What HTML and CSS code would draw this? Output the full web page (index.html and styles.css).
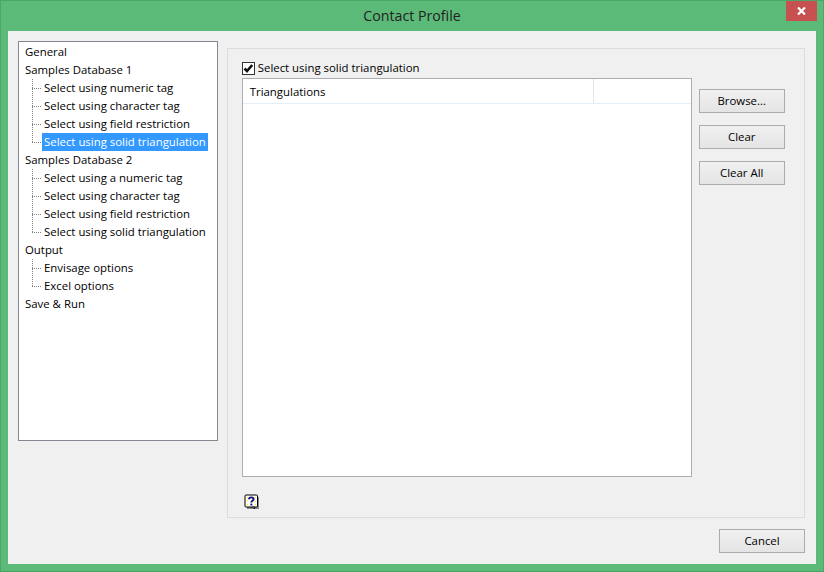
FILE: index.html
```html
<!DOCTYPE html>
<html lang="en">
<head>
<meta charset="utf-8">
<title>Contact Profile</title>
<link rel="stylesheet" href="styles.css">
</head>
<body>
<div class="window">
  <header class="titlebar">
    <span class="title">Contact Profile</span>
    <button class="close" aria-label="Close">
      <svg width="9" height="8" viewBox="0 0 9 8"><path d="M1 0.5 L8 7.5 M8 0.5 L1 7.5" stroke="#fff" stroke-width="2.2" fill="none"/></svg>
    </button>
  </header>
  <div class="client">
    <div class="main">
      <ul class="tree">
        <li class="node">General</li>
        <li class="node">Samples Database 1</li>
        <li class="leaf"><span>Select using numeric tag</span></li>
        <li class="leaf"><span>Select using character tag</span></li>
        <li class="leaf"><span>Select using field restriction</span></li>
        <li class="leaf last"><span class="selected">Select using solid triangulation</span></li>
        <li class="node">Samples Database 2</li>
        <li class="leaf"><span>Select using a numeric tag</span></li>
        <li class="leaf"><span>Select using character tag</span></li>
        <li class="leaf"><span>Select using field restriction</span></li>
        <li class="leaf last"><span>Select using solid triangulation</span></li>
        <li class="node">Output</li>
        <li class="leaf"><span>Envisage options</span></li>
        <li class="leaf last"><span>Excel options</span></li>
        <li class="node">Save &amp; Run</li>
      </ul>
      <section class="panel">
        <label class="check">
          <span class="box">
            <svg width="11" height="11" viewBox="0 0 11 11"><path d="M1.5 5.5 L4 8 L9.2 2" stroke="#111" stroke-width="2.6" fill="none"/></svg>
          </span>
          Select using solid triangulation
        </label>
        <div class="content">
          <div class="list">
            <div class="list-head">
              <div class="col-main">Triangulations</div>
              <div class="col-rest"></div>
            </div>
          </div>
          <div class="actions">
            <button class="btn">Browse...</button>
            <button class="btn">Clear</button>
            <button class="btn">Clear All</button>
          </div>
        </div>
        <div class="help">
          <svg width="16" height="16" viewBox="0 0 16 16">
            <path d="M3 3 H15 V15 H3 Z" fill="#8a8a8a"/>
            <rect x="1" y="1" width="12.5" height="12" rx="1" fill="#fffff4" stroke="#000"/>
            <path d="M8.5 13 L10.5 15 L10.5 13 Z" fill="#fff" stroke="#000" stroke-width="0.8"/>
            <path d="M3 3h1v1H3zM11 3h1v1h-1zM3 6h1v1H3zM11 7h1v1h-1zM3 10h1v1H3zM11 10h1v1h-1z" fill="#f0e800"/>
            <path d="M5 5.2 C5 2.8 9.6 2.8 9.6 5.2 C9.6 6.8 7.3 6.8 7.3 8.5" stroke="#10108a" stroke-width="1.9" fill="none"/>
            <rect x="6.4" y="9.6" width="1.9" height="1.9" fill="#10108a"/>
          </svg>
        </div>
      </section>
    </div>
    <footer class="footer">
      <button class="btn">Cancel</button>
    </footer>
  </div>
</div>
</body>
</html>
```
FILE: styles.css
```css
* { box-sizing: border-box; }
html, body { margin: 0; padding: 0; }
body {
  width: 824px;
  height: 572px;
  overflow: hidden;
  font-family: "Open Sans", "Noto Sans", sans-serif;
  font-size: 11.4px;
  color: #000;
}
.window {
  width: 824px;
  height: 572px;
  display: flex;
  flex-direction: column;
  background: #5cba78;
  border: 1px solid #4ea56a;
  padding: 0 7px 7px;
}
.titlebar {
  height: 30px;
  flex: none;
  display: flex;
  justify-content: center;
  position: relative;
}
.title {
  font-size: 14.2px;
  line-height: 30px;
  color: #222;
}
.close {
  position: absolute;
  top: 0;
  right: -1px;
  width: 31px;
  height: 20px;
  padding: 0;
  border: 0;
  background: #c75050;
  display: flex;
  align-items: center;
  justify-content: center;
}
.client {
  flex: 1;
  display: flex;
  flex-direction: column;
  background: #f0f0f0;
  padding: 10px 11px 11px 10px;
}
.main {
  display: flex;
  align-items: flex-start;
  gap: 9px;
}
.tree {
  list-style: none;
  margin: 0;
  width: 200px;
  height: 400px;
  padding: 1px 0 0 6px;
  background: #fff;
  border: 1px solid #828790;
  line-height: 18px;
}
.node, .leaf { height: 18px; white-space: nowrap; }
.leaf {
  padding-left: 17px;
  background-image:
    repeating-linear-gradient(to bottom, #808080 0 1px, transparent 1px 2px),
    repeating-linear-gradient(to right, #808080 0 1px, transparent 1px 2px);
  background-repeat: no-repeat;
  background-size: 1px 100%, 10px 1px;
  background-position: 7px 0, 7px 9px;
}
.leaf.last {
  background-size: 1px 10px, 10px 1px;
}
.leaf span { display: inline-block; padding: 0 2px; height: 18px; }
.leaf .selected { background: #3399ff; color: #fff; }
.panel {
  width: 579px;
  height: 470px;
  margin-top: 7px;
  border: 1px solid #dcdcdc;
  padding: 12px 14px 0;
  display: flex;
  flex-direction: column;
}
.check {
  display: flex;
  align-items: center;
  gap: 3px;
  height: 14px;
  line-height: 14px;
}
.box {
  width: 13px;
  height: 13px;
  border: 1px solid #333;
  background: #fff;
  display: flex;
  align-items: center;
  justify-content: center;
}
.content {
  margin-top: 3px;
  display: flex;
  gap: 7px;
}
.list {
  width: 450px;
  height: 399px;
  background: #fff;
  border: 1px solid #abadb3;
}
.list-head {
  display: flex;
  height: 25px;
  border-bottom: 1px solid #e5eef7;
}
.col-main {
  width: 351px;
  padding-left: 7px;
  line-height: 25px;
  border-right: 1px solid #e5e5e5;
}
.col-rest { flex: 1; }
.actions {
  display: flex;
  flex-direction: column;
  gap: 12px;
  padding-top: 11px;
}
.btn {
  width: 86px;
  height: 24px;
  padding: 0 0 1px;
  font: inherit;
  color: #000;
  border: 1px solid #acacac;
  background: linear-gradient(to bottom, #f0f0f0, #e5e5e5);
}
.help {
  margin-top: 17px;
  margin-left: 2px;
  height: 16px;
  display: flex;
}
.footer {
  display: flex;
  justify-content: flex-end;
  margin-top: 11px;
}
```
